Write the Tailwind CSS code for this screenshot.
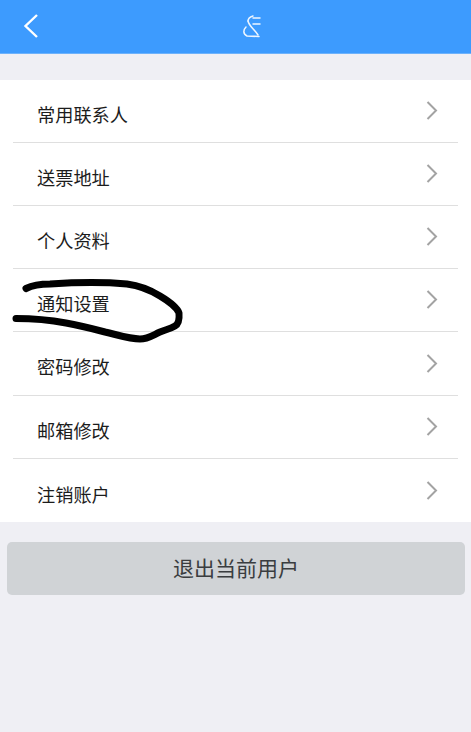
<!DOCTYPE html>
<html lang="zh">
<head>
  <meta charset="UTF-8">
  <meta name="viewport" content="width=device-width, initial-scale=1.0">
  <title>设置</title>
  <script src="https://cdn.jsdelivr.net/npm/@tailwindcss/browser@4"></script>
</head>
<body class="relative bg-[#efeff4] h-[732px] overflow-hidden font-['Liberation_Sans','Noto_Sans_CJK_SC',sans-serif]">
  <!-- Header -->
  <header class="relative h-[54px] bg-[#3d9bfe] border-b border-[#6db2fb]">
    <svg class="absolute left-[22px] top-[13px]" width="18" height="26" viewBox="0 0 18 26" fill="none" stroke="#fff" stroke-width="2.4">
      <path d="M15 2 L3.5 13 L15 24"/>
    </svg>
    <svg class="absolute left-[241px] top-[14px]" width="22" height="24" viewBox="0 0 22 24" fill="none" stroke="#eef6ff" stroke-width="1.5" stroke-linecap="round">
      <path d="M12 2 C9 3 7 4.500 7 7"/>
      <path d="M12 4 L19 4"/>
      <path d="M12 10 L19 10"/>
      <path d="M7 7 C8 12 13 15 17 21"/>
      <path d="M5 13 C2 16 2 20 6 22 L18 22.500"/>
    </svg>
  </header>

  <!-- Menu -->
  <ul class="mt-[26px] bg-white h-[442px] text-[18.2px] leading-6 text-[#1c1c1c]">
    <li class="mx-[13px] h-[63px] pl-[24px] pr-[20px] flex items-center justify-between border-b border-[#dfdfdf]">
      <span class="mt-[9px]">常用联系人</span>
      <svg class="mb-[1px]" width="12" height="19" viewBox="0 0 12 19" fill="none" stroke="#a3a3a3" stroke-width="2"><path d="M1.500 1 L10 9.500 L1.500 18"/></svg>
    </li>
    <li class="mx-[13px] h-[63px] pl-[24px] pr-[20px] flex items-center justify-between border-b border-[#dfdfdf]">
      <span class="mt-[9px]">送票地址</span>
      <svg class="mb-[1px]" width="12" height="19" viewBox="0 0 12 19" fill="none" stroke="#a3a3a3" stroke-width="2"><path d="M1.500 1 L10 9.500 L1.500 18"/></svg>
    </li>
    <li class="mx-[13px] h-[63px] pl-[24px] pr-[20px] flex items-center justify-between border-b border-[#dfdfdf]">
      <span class="mt-[9px]">个人资料</span>
      <svg class="mb-[1px]" width="12" height="19" viewBox="0 0 12 19" fill="none" stroke="#a3a3a3" stroke-width="2"><path d="M1.500 1 L10 9.500 L1.500 18"/></svg>
    </li>
    <li class="mx-[13px] h-[63px] pl-[24px] pr-[20px] flex items-center justify-between border-b border-[#dfdfdf]">
      <span class="mt-[9px]">通知设置</span>
      <svg class="mb-[1px]" width="12" height="19" viewBox="0 0 12 19" fill="none" stroke="#a3a3a3" stroke-width="2"><path d="M1.500 1 L10 9.500 L1.500 18"/></svg>
    </li>
    <li class="mx-[13px] h-[64px] pl-[24px] pr-[20px] flex items-center justify-between border-b border-[#dfdfdf]">
      <span class="mt-[9px]">密码修改</span>
      <svg class="mb-[1px]" width="12" height="19" viewBox="0 0 12 19" fill="none" stroke="#a3a3a3" stroke-width="2"><path d="M1.500 1 L10 9.500 L1.500 18"/></svg>
    </li>
    <li class="mx-[13px] h-[63px] pl-[24px] pr-[20px] flex items-center justify-between border-b border-[#dfdfdf]">
      <span class="mt-[9px]">邮箱修改</span>
      <svg class="mb-[1px]" width="12" height="19" viewBox="0 0 12 19" fill="none" stroke="#a3a3a3" stroke-width="2"><path d="M1.500 1 L10 9.500 L1.500 18"/></svg>
    </li>
    <li class="mx-[13px] h-[63px] pl-[24px] pr-[20px] flex items-center justify-between">
      <span class="mt-[10px]">注销账户</span>
      <svg class="mb-[1px]" width="12" height="19" viewBox="0 0 12 19" fill="none" stroke="#a3a3a3" stroke-width="2"><path d="M1.500 1 L10 9.500 L1.500 18"/></svg>
    </li>
  </ul>

  <button class="block mx-[7px] mt-[20px] w-[458px] h-[53px] rounded-[5px] bg-[#d0d3d6] text-[21px] text-[#3a3d40]">退出当前用户</button>

  <!-- hand drawn marker ring over the row -->
  <svg class="absolute left-0 top-0 pointer-events-none" width="471" height="732" viewBox="0 0 471 732" fill="none" stroke="#000" stroke-width="7" stroke-linecap="round" stroke-linejoin="round">
    <path d="M26 288.500 C32 285.500 40 284 50 284 C80 282 105 282 127 284 C142 286 152 291 160 296 C170 302 177 307 179 313 C179.500 319 178.500 324 175 326 C170 329 166 329.500 160 332 C153 335 148 339 140 339 C130 339 118 335 105 332 C90 328 78 325 66 323 C50 320 35 318.500 16 318.500"/>
  </svg>
</body>
</html>
